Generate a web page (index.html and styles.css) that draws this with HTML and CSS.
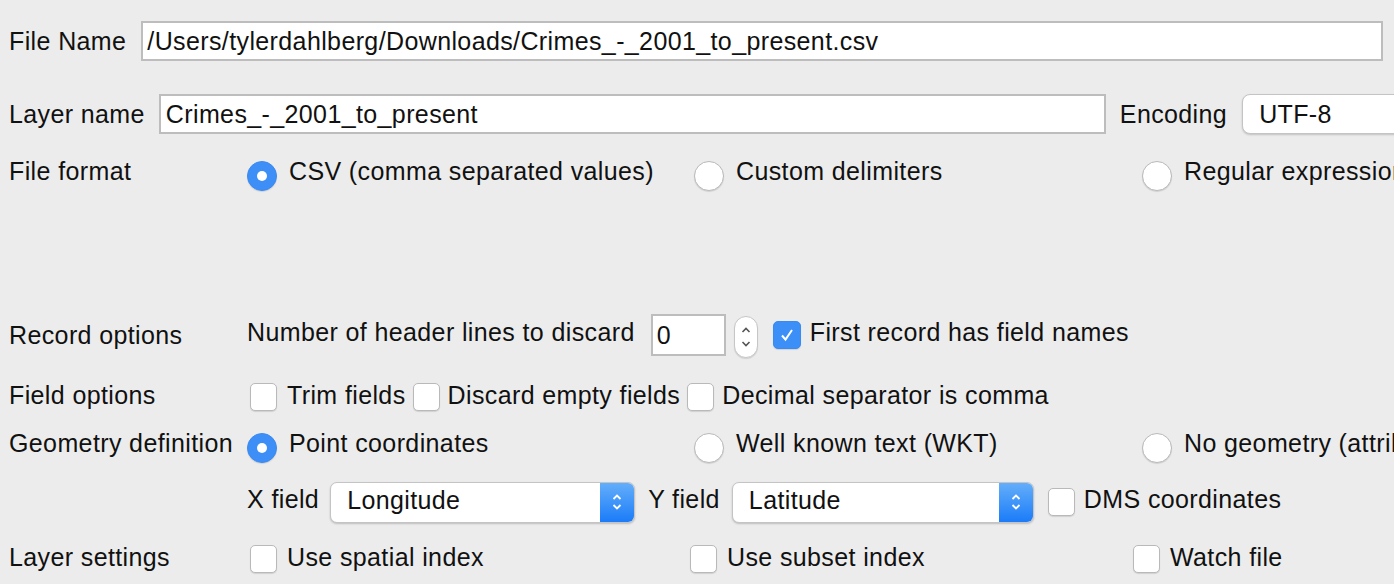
FILE: index.html
```html
<!DOCTYPE html>
<html>
<head>
<meta charset="utf-8">
<link rel="stylesheet" href="styles.css">
</head>
<body>
<div class="dialog">
  <div class="row row-file">
    <span class="lbl">File Name</span>
    <div class="field field-file">/Users/tylerdahlberg/Downloads/Crimes_-_2001_to_present.csv</div>
  </div>

  <div class="row row-layer">
    <span class="lbl">Layer name</span>
    <div class="field field-layer">Crimes_-_2001_to_present</div>
    <span class="lbl">Encoding</span>
    <div class="combo-plain">UTF-8</div>
  </div>

  <div class="row row-format grid-row">
    <span class="lbl">File format</span>
    <div class="opts radio-opts">
      <label class="opt"><span class="radio on"></span><span>CSV (comma separated values)</span></label>
      <label class="opt"><span class="radio"></span><span>Custom delimiters</span></label>
      <label class="opt"><span class="radio"></span><span>Regular expression delimiter</span></label>
    </div>
  </div>

  <div class="row row-record grid-row">
    <span class="lbl">Record options</span>
    <div class="inline">
      <span class="up">Number of header lines to discard</span>
      <div class="spin-field">0</div>
      <div class="spinner">
        <svg width="12" height="30" viewBox="0 0 12 30"><path d="M2.5 10 L6 6.5 L9.5 10" fill="none" stroke="#555" stroke-width="1.6"/><path d="M2.5 20 L6 23.5 L9.5 20" fill="none" stroke="#555" stroke-width="1.6"/></svg>
      </div>
      <label class="opt first-rec"><span class="check on"><svg width="18" height="18" viewBox="0 0 18 18"><path d="M4 9.5 L7.5 13.5 L14 4" fill="none" stroke="#fff" stroke-width="2"/></svg></span><span class="up">First record has field names</span></label>
    </div>
  </div>

  <div class="row row-fieldopts grid-row">
    <span class="lbl">Field options</span>
    <div class="inline tight">
      <label class="opt copt"><span class="check"></span><span>Trim fields</span></label>
      <label class="opt copt"><span class="check"></span><span>Discard empty fields</span></label>
      <label class="opt copt"><span class="check"></span><span>Decimal separator is comma</span></label>
    </div>
  </div>

  <div class="row row-geom grid-row">
    <span class="lbl">Geometry definition</span>
    <div class="opts radio-opts">
      <label class="opt"><span class="radio on"></span><span>Point coordinates</span></label>
      <label class="opt"><span class="radio"></span><span>Well known text (WKT)</span></label>
      <label class="opt"><span class="radio"></span><span>No geometry (attribute only table)</span></label>
    </div>
  </div>

  <div class="row row-xy grid-row">
    <span class="lbl"></span>
    <div class="inline">
      <span class="up">X field</span>
      <div class="combo combo-x"><span class="combo-text">Longitude</span><span class="combo-btn"><svg width="14" height="26" viewBox="0 0 14 26"><path d="M3.5 10 L7 6.5 L10.5 10" fill="none" stroke="#fff" stroke-width="1.8"/><path d="M3.5 16 L7 19.5 L10.5 16" fill="none" stroke="#fff" stroke-width="1.8"/></svg></span></div>
      <span class="up ylbl">Y field</span>
      <div class="combo combo-y"><span class="combo-text">Latitude</span><span class="combo-btn"><svg width="14" height="26" viewBox="0 0 14 26"><path d="M3.5 10 L7 6.5 L10.5 10" fill="none" stroke="#fff" stroke-width="1.8"/><path d="M3.5 16 L7 19.5 L10.5 16" fill="none" stroke="#fff" stroke-width="1.8"/></svg></span></div>
      <label class="opt dms"><span class="check"></span><span class="up">DMS coordinates</span></label>
    </div>
  </div>

  <div class="row row-settings grid-row">
    <span class="lbl">Layer settings</span>
    <div class="opts check-opts">
      <label class="opt"><span class="check"></span><span>Use spatial index</span></label>
      <label class="opt"><span class="check"></span><span>Use subset index</span></label>
      <label class="opt"><span class="check"></span><span>Watch file</span></label>
    </div>
  </div>
</div>
</body>
</html>
```

FILE: styles.css
```css
html, body {
  margin: 0;
  padding: 0;
  background: #ececec;
  overflow: hidden;
}
body {
  width: 1394px;
  height: 584px;
  font-family: "Liberation Sans", Arial, sans-serif;
  font-size: 25px;
  letter-spacing: 0.38px;
  line-height: 1;
  color: #111;
}
.dialog {
  display: flex;
  flex-direction: column;
  padding: 20px 0 0 9px;
}
.row {
  display: flex;
  align-items: center;
  white-space: nowrap;
}
.row-file {
  height: 42px;
  gap: 15px;
  padding-right: 11px;
}
.field {
  box-sizing: border-box;
  height: 40px;
  background: #fff;
  border: 2px solid #bdbdbd;
  display: flex;
  align-items: center;
  padding-left: 4px;
}
.field-file {
  flex: 1;
}
.row-layer {
  margin-top: 31px;
  height: 42px;
  gap: 14px;
}
.field-layer {
  flex: none;
  width: 947px;
  padding-left: 5px;
}
.combo-plain {
  box-sizing: border-box;
  margin-left: 1px;
  width: 220px;
  flex: none;
  height: 40px;
  background: #fff;
  border: 1px solid #c4c4c4;
  border-radius: 8px;
  box-shadow: 0 1px 2px rgba(0,0,0,0.18);
  display: flex;
  align-items: center;
  padding-left: 16px;
}
.grid-row {
  display: grid;
  grid-template-columns: 238px 1fr;
  align-items: center;
}
.row-format {
  margin-top: 21px;
  height: 30px;
}
.opts {
  display: grid;
  align-items: center;
}
.radio-opts {
  grid-template-columns: 447px 448px 1fr;
}
.check-opts {
  grid-template-columns: 440px 443px 1fr;
}
.opt {
  display: flex;
  align-items: center;
}
.up {
  padding-bottom: 5px;
}
.radio {
  box-sizing: border-box;
  width: 30px;
  height: 30px;
  flex: none;
  border-radius: 50%;
  background: #fff;
  border: 1px solid #b9b9b9;
  box-shadow: 0 1px 1px rgba(0,0,0,0.12);
  margin: 5px 12px -5px 0;
  position: relative;
}
.radio.on {
  background: #3d8ff7;
  border-color: #3a8af3;
}
.radio.on::after {
  content: "";
  position: absolute;
  left: 9px;
  top: 9px;
  width: 10px;
  height: 10px;
  border-radius: 50%;
  background: #fff;
}
.check {
  box-sizing: border-box;
  width: 27px;
  height: 28px;
  flex: none;
  border-radius: 5px;
  background: #fff;
  border: 1px solid #b9b9b9;
  box-shadow: 0 1px 1px rgba(0,0,0,0.12);
  margin: 2px 10px -2px 3px;
  display: flex;
  align-items: center;
  justify-content: center;
}
.check.on {
  background: #3b8ff6;
  border-color: #3a8af3;
}
.row-record {
  margin-top: 128px;
  height: 42px;
}
.inline {
  display: flex;
  align-items: center;
}
.spin-field {
  box-sizing: border-box;
  width: 75px;
  height: 42px;
  margin-left: 16px;
  background: #fff;
  border: 2px solid #bdbdbd;
  padding-left: 4px;
  display: flex;
  align-items: center;
}
.spinner {
  box-sizing: border-box;
  width: 24px;
  height: 42px;
  margin: 2px 0 -2px 8px;
  border: 1px solid #c6c6c6;
  border-radius: 12px;
  background: #fff;
  box-shadow: 0 1px 1px rgba(0,0,0,0.12);
  display: flex;
  align-items: center;
  justify-content: center;
}
.first-rec .check {
  width: 28px;
  margin: 0 9px 0 15px;
}
.row-fieldopts {
  margin-top: 24px;
  height: 30px;
}
.tight .copt + .copt .check {
  margin-left: 7px;
  margin-right: 8px;
}
.row-geom {
  margin-top: 18px;
  height: 30px;
}
.row-xy {
  margin-top: 23px;
  height: 42px;
}
.combo {
  box-sizing: border-box;
  height: 41px;
  display: flex;
  align-items: stretch;
  background: #fff;
  border: 1px solid #c4c4c4;
  border-radius: 7px;
  box-shadow: 0 1px 2px rgba(0,0,0,0.2);
  overflow: hidden;
}
.combo-x {
  width: 305px;
  margin-left: 11px;
}
.combo-y {
  width: 302px;
  margin-left: 12px;
}
.ylbl {
  margin-left: 13px;
}
.combo-text {
  flex: 1;
  display: flex;
  align-items: center;
  padding-left: 16px;
  padding-bottom: 3px;
}
.combo-btn {
  width: 34px;
  flex: none;
  background: linear-gradient(#64aefa, #1b7cf8);
  display: flex;
  align-items: center;
  justify-content: center;
}
.dms .check {
  margin: 0 9px 0 14px;
}
.row-settings {
  margin-top: 19px;
  height: 30px;
}
```
